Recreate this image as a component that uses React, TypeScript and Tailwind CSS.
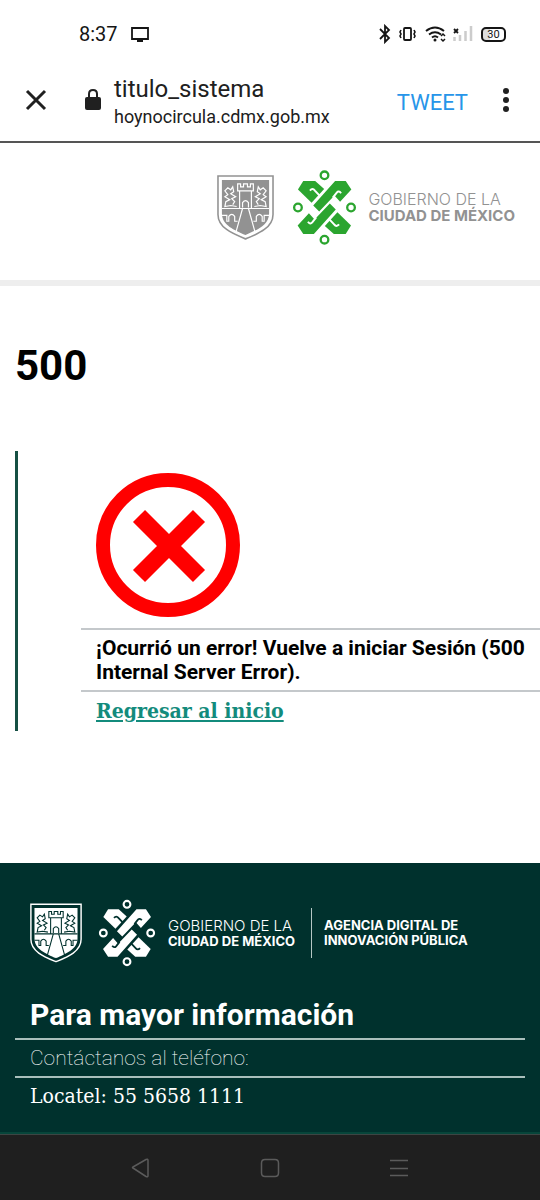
import React from "react";

const Shield = ({ className, fg, bg }: { className: string; fg: string; bg: string }) => (
  <svg className={className} viewBox="0 0 58 66" fill="none" aria-hidden="true">
    <path d="M1 1H57V40C57 54 41 60 29 65C17 60 1 54 1 40Z" fill={bg} stroke={fg} strokeWidth="1.6" />
    <path d="M5 5H53V39C53 51 40 56 29 61C18 56 5 51 5 39Z" fill={fg} />
    <g stroke={bg} strokeWidth="1.2">
      <path d="M5 34H53" />
      <path d="M23 34V16H21V9H24V12H27V9H31V12H34V9H37V16H35V34M21 16H37" />
      <path d="M26 33V28Q29 24 32 28V33" />
      <path d="M26 34L19 59M32 34L39 59" />
      <path d="M5 41H10V47H12V42Q15 38 18 42V47H21M53 41H48V47H46V42Q43 38 40 42V47H37" />
      <path d="M20 32L14 31L8 32L9 27L13 25L8 22L11 20L8 16L11 13L14 15L16 12L17 17L14 19L19 22L15 24L18 27L16 30" />
      <path d="M38 32L44 31L50 32L49 27L45 25L50 22L47 20L50 16L47 13L44 15L42 12L41 17L44 19L39 22L43 24L40 27L42 30" />
    </g>
  </svg>
);

const Half = ({ fg, bg }: { fg: string; bg: string }) => (
  <>
    <path d="M24 68L40 42H76L103 66L65 108Z" fill={fg} />
    <path d="M60 71Q68 62 75 71L90 87" stroke={bg} strokeWidth="6" />
    <path d="M70 116L136 42H168L185 68L151 105L134 86L88 134Z" fill={fg} />
    <path d="M129 92L141 77Q147 70 154 79" stroke={bg} strokeWidth="6" />
  </>
);

const Emblem = ({ className, fg, bg }: { className: string; fg: string; bg: string }) => (
  <svg className={className} viewBox="6 9 196 226" fill="none" aria-hidden="true">
    <Half fg={fg} bg={bg} />
    <g transform="rotate(180 104 122)">
      <Half fg={fg} bg={bg} />
    </g>
    <g stroke={fg} strokeWidth="7">
      <circle cx="104" cy="25" r="11.5" />
      <circle cx="104" cy="219" r="11.5" />
      <circle cx="24" cy="122" r="11.5" />
      <circle cx="184" cy="122" r="11.5" />
    </g>
  </svg>
);

const StatusIcons = () => (
  <svg className="h-5 w-[98px]" viewBox="0 0 98 20" fill="none" stroke="#151515" aria-hidden="true">
    <path d="M1 5L10 14L6 18V2L10 6L1 15" strokeWidth="1.8" />
    <rect x="25" y="4" width="7" height="12" rx="1" strokeWidth="1.8" />
    <path d="M22 6L21 8L22 10L21 12L22 14M35 6L36 8L35 10L36 12L35 14" strokeWidth="1.6" />
    <path d="M47 7Q56 0 65 7M50 10.500Q56 6 62 10.500M53 13.500Q56 11 59 13.500" strokeWidth="2" />
    <circle cx="56" cy="16" r="1.500" fill="#151515" stroke="none" />
    <path d="M62 12L64 10L66 12M62 15L64 17L66 15" strokeWidth="1.5" />
    <path d="M75 5L79 9M79 5L75 9" strokeWidth="1.8" />
    <path d="M75.500 17V13M81 17V11M86.500 17V7M92 17V2" stroke="#cccccc" strokeWidth="2.500" />
  </svg>
);

const NavKeys = [
  { label: "Atrás", d: "M15 1.500L2 9Q1 9.500 2 10L15 18.500Q17 19.500 17 17.500V2.500Q17 0.500 15 1.500Z" },
  { label: "Inicio", d: "M5 1.500H15Q18.500 1.500 18.500 5V15Q18.500 18.500 15 18.500H5Q1.500 18.500 1.500 15V5Q1.500 1.500 5 1.500Z" },
  { label: "Recientes", d: "M1 2.500H19M1 10.500H19M1 17.500H19" },
];

export default function App() {
  return (
    <div className="flex min-h-screen flex-col bg-white font-['Roboto',sans-serif] text-black">
      <div className="flex h-16 items-center justify-between pt-1 pr-[34px] pl-[79px] text-[#151515]">
        <div className="flex items-center gap-3">
          <span className="text-xl">8:37</span>
          <svg className="h-4 w-5" viewBox="0 0 20 16" fill="none" stroke="#151515" strokeWidth="1.8" aria-hidden="true">
            <path d="M2 2H18V13H2ZM7 15H13" />
          </svg>
        </div>
        <div className="flex items-center gap-1">
          <StatusIcons />
          <span className="flex h-[15px] w-[25px] items-center justify-center rounded-[5px] border-2 border-[#151515] bg-[linear-gradient(90deg,#ddd_35%,#fff_35%)] text-[11px] leading-none">
            30
          </span>
        </div>
      </div>

      <header className="flex h-[79px] items-center border-b-2 border-[#555] pr-[22px] pb-1 pl-6 text-[#202020]">
        <button aria-label="Cerrar" className="pb-0.5">
          <svg className="size-6" viewBox="0 0 24 24" fill="none" stroke="#202020" strokeWidth="3" aria-hidden="true">
            <path d="M3 3L21 21M21 3L3 21" />
          </svg>
        </button>
        <svg className="mr-3 mb-0.5 ml-9 h-6 w-[18px]" viewBox="0 0 18 24" fill="none" aria-hidden="true">
          <rect x="1" y="9" width="16" height="13" rx="2" fill="#202020" />
          <path d="M5 10V6Q5 2 9 2T13 6V10" stroke="#202020" strokeWidth="2" />
        </svg>
        <div className="flex-1">
          <div className="text-2xl leading-8">titulo_sistema</div>
          <div className="text-lg leading-6">hoynocircula.cdmx.gob.mx</div>
        </div>
        <button className="mr-[26px] pt-1 text-[22px] text-[#2795e9]">TWEET</button>
        <button aria-label="Más opciones">
          <svg className="h-7 w-6" viewBox="0 0 24 28" fill="#202020" aria-hidden="true">
            <circle cx="12" cy="4" r="3" />
            <circle cx="12" cy="13" r="3" />
            <circle cx="12" cy="22" r="3" />
          </svg>
        </button>
      </header>

      <div className="flex h-[143px] items-center justify-end border-b-[6px] border-[#eeeeee] pr-[25px] pb-[9px] font-['Inter',sans-serif] text-[#929292]">
        <Shield className="mr-[18px] h-[65px] w-[57px]" fg="#929292" bg="#ffffff" />
        <Emblem className="mr-[11px] h-[75px] w-[65px]" fg="#2ba52f" bg="#ffffff" />
        <div>
          <div className="text-base leading-[18px] font-light">GOBIERNO DE LA</div>
          <div className="text-[15px] leading-4 font-bold">CIUDAD DE MÉXICO</div>
        </div>
      </div>

      <main className="flex-1 pl-[15px]">
        <h1 className="pt-14 text-[42px] leading-12 font-bold">500</h1>
        <section className="mt-[61px] mb-8 h-[280px] border-l-[3px] border-[#165044] pt-[22px] pl-[63px]">
          <svg className="mb-[11px] ml-[15px] size-36" viewBox="0 0 144 144" fill="none" stroke="#ff0000" aria-hidden="true">
            <circle cx="72" cy="72" r="65" strokeWidth="14" />
            <path d="M43 43L103 103M103 43L43 103" strokeWidth="17" />
          </svg>
          <p className="border-y-2 border-[#c4c8cb] py-1.5 pl-[15px] text-[21px] leading-6 font-bold">
            ¡Ocurrió un error! Vuelve a iniciar Sesión (500 Internal Server Error).
          </p>
          <div className="py-[3px] pl-[15px]">
            <a href="#inicio" className="font-['DejaVu_Serif_Condensed','DejaVu_Serif',serif] text-[21px] leading-8 font-bold text-[#138b7c] underline decoration-2 underline-offset-2">
              Regresar al inicio
            </a>
          </div>
        </section>
      </main>

      <footer className="h-[271px] border-b-2 border-[#07453a] bg-[#00312d] px-[15px] pt-9 text-white">
        <div className="flex items-center pl-[15px] font-['Inter',sans-serif]">
          <Shield className="mr-4 h-[60px] w-[52px]" fg="#ffffff" bg="#00312d" />
          <Emblem className="mr-3 h-[68px] w-[58px]" fg="#ffffff" bg="#00312d" />
          <div>
            <div className="text-[15px] leading-4 font-light">GOBIERNO DE LA</div>
            <div className="text-[13px] leading-[15px] font-bold">CIUDAD DE MÉXICO</div>
          </div>
          <div className="mr-3 ml-4 h-[50px] w-px bg-[#b5c7c4]" />
          <div className="text-[13px] leading-[15px] font-bold">
            <div>AGENCIA DIGITAL DE</div>
            <div>INNOVACIÓN PÚBLICA</div>
          </div>
        </div>
        <h2 className="mt-7 border-b-2 border-[#a9bfbb] pb-[3px] pl-[15px] text-[30px] leading-10 font-bold">Para mayor información</h2>
        <p className="border-b-2 border-[#a9bfbb] pl-[15px] text-[21px] leading-9 font-thin">Contáctanos al teléfono:</p>
        <p className="pl-[15px] font-['DejaVu_Serif_Condensed','DejaVu_Serif',serif] text-[21px] leading-9">Locatel: 55 5658 1111</p>
      </footer>

      <nav className="flex h-[66px] items-center justify-center gap-[109px] border-t border-[#3c4543] bg-[#1f1f1f]">
        {NavKeys.map((key) => (
          <button key={key.label} aria-label={key.label}>
            <svg className="size-5" viewBox="0 0 20 20" fill="none" stroke="#5b5b5b" strokeWidth="1.500" aria-hidden="true">
              <path d={key.d} />
            </svg>
          </button>
        ))}
      </nav>
    </div>
  );
}
